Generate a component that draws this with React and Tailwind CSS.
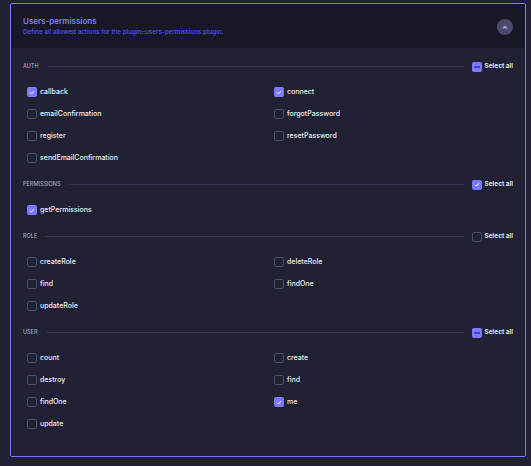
import React from "react";

const sections = [
  {
    name: "AUTH",
    state: "some",
    actions: [
      ["callback", true],
      ["connect", true],
      ["emailConfirmation", false],
      ["forgotPassword", false],
      ["register", false],
      ["resetPassword", false],
      ["sendEmailConfirmation", false],
    ],
  },
  {
    name: "PERMISSIONS",
    state: "all",
    actions: [["getPermissions", true]],
  },
  {
    name: "ROLE",
    state: "none",
    actions: [
      ["createRole", false],
      ["deleteRole", false],
      ["find", false],
      ["findOne", false],
      ["updateRole", false],
    ],
  },
  {
    name: "USER",
    state: "some",
    actions: [
      ["count", false],
      ["create", false],
      ["destroy", false],
      ["find", false],
      ["findOne", false],
      ["me", true],
      ["update", false],
    ],
  },
];

function Box({ state }) {
  if (state === "all" || state === true) {
    return (
      <span className="flex h-[10px] w-[10px] shrink-0 items-center justify-center rounded-[2px] bg-[#7b79ff]">
        <svg width="6" height="5" viewBox="0 0 6 5" fill="none">
          <path d="M1 2.6 L2.4 4 L5 1.2" stroke="#ffffff" strokeWidth="1" />
        </svg>
      </span>
    );
  }
  if (state === "some") {
    return (
      <span className="flex h-[10px] w-[10px] shrink-0 items-center justify-center rounded-[2px] bg-[#7b79ff]">
        <span className="h-[2px] w-[6px] bg-[#4542c9]" />
      </span>
    );
  }
  return <span className="h-[10px] w-[10px] shrink-0 rounded-[2px] border border-[#4a4a6a]" />;
}

export default function App() {
  return (
    <div className="min-h-screen w-full bg-[#212134] pl-[10px] pr-[5px] pt-[3px] pb-[9px] font-['Inter',sans-serif]">
      <div className="overflow-hidden rounded-[2px] border border-[#7b79ff]">
        <div className="flex h-[44px] items-center justify-between bg-[#181826] px-[12px]">
          <div className="flex flex-col gap-[2px] pt-[1px]">
            <span className="text-[8px] font-semibold leading-[10px] text-[#7b79ff]">Users-permissions</span>
            <span className="text-[6.3px] font-medium leading-[9px] text-[#5552ff]">
              Define all allowed actions for the plugin::users-permissions plugin.
            </span>
          </div>
          <span className="mt-[1px] flex h-[16px] w-[16px] items-center justify-center rounded-full bg-[#4a4a6a]">
            <svg width="6" height="4" viewBox="0 0 6 4">
              <path d="M0 3.5 L3 0.5 L6 3.5 Z" fill="#9a98ff" />
            </svg>
          </span>
        </div>
        <div className="flex flex-col gap-[16px] bg-[#212134] pt-[13px] pb-[27px]">
          {sections.map((s) => (
            <div key={s.name} className="flex flex-col">
              <div className="flex h-[11px] items-center px-[12px]">
                <span className="text-[5.5px] font-medium uppercase text-[#a5a5ba]">{s.name}</span>
                <span className="mx-[8px] h-px flex-1 bg-[#32324d]" />
                <Box state={s.state} />
                <span className="ml-[3px] text-[6.5px] font-semibold text-[#eaeaef]">Select all</span>
              </div>
              <div className="mt-[15px] grid grid-cols-2 gap-y-[12px] pl-[16px] pr-[4px]">
                {s.actions.map(([label, checked], i) => (
                  <div key={label + i} className="flex h-[10px] items-center gap-[3px]">
                    <Box state={checked} />
                    <span className="text-[7px] font-medium leading-[10px] text-[#eaeaef]">{label}</span>
                  </div>
                ))}
              </div>
            </div>
          ))}
        </div>
      </div>
    </div>
  );
}
